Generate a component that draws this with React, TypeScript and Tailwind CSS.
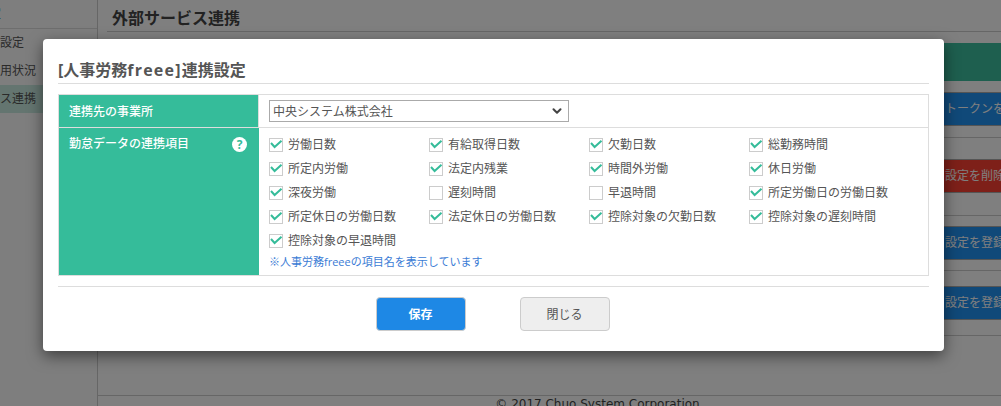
import React from "react";
import { ChevronDown } from "lucide-react";

const rows: { label: string; on: boolean }[] = [
  { label: "労働日数", on: true },
  { label: "有給取得日数", on: true },
  { label: "欠勤日数", on: true },
  { label: "総勤務時間", on: true },
  { label: "所定内労働", on: true },
  { label: "法定内残業", on: true },
  { label: "時間外労働", on: true },
  { label: "休日労働", on: true },
  { label: "深夜労働", on: true },
  { label: "遅刻時間", on: false },
  { label: "早退時間", on: false },
  { label: "所定労働日の労働日数", on: true },
  { label: "所定休日の労働日数", on: true },
  { label: "法定休日の労働日数", on: true },
  { label: "控除対象の欠勤日数", on: true },
  { label: "控除対象の遅刻時間", on: true },
  { label: "控除対象の早退時間", on: true },
];

function Check({ label, on }: { label: string; on: boolean }) {
  return (
    <div className="flex h-[24px] items-center gap-[5px]">
      <span className="flex h-[14px] w-[14px] shrink-0 items-center justify-center border border-[#cccccc] bg-white">
        {on && (
          <svg width="12" height="12" viewBox="0 0 12 12" fill="none" className="overflow-visible">
            <path d="M1 4 L4.6 8 L11.5 1.8" stroke="#35bc9a" strokeWidth="2" />
          </svg>
        )}
      </span>
      <span className="whitespace-nowrap">{label}</span>
    </div>
  );
}

export default function App() {
  return (
    <div className="relative h-[406px] w-[1001px] overflow-hidden bg-white text-[12px] text-[#555555] [font-family:'Open_Sans','Noto_Sans_CJK_JP',sans-serif]">
      {/* page behind the dialog */}
      <div className="flex h-full">
        <aside className="w-[98px] shrink-0 overflow-hidden border-r border-[#cccccc] bg-[#fdfdfd]">
          <div className="h-[29px] border-b border-[#dddddd] pt-[6px] text-[#2a8fb0]">
            <span className="-ml-[11px] block leading-[16px]">定</span>
          </div>
          <div className="flex h-[28px] items-center whitespace-nowrap">
            <span className="-ml-[24px]">基本設定</span>
          </div>
          <div className="flex h-[28px] items-center whitespace-nowrap">
            <span className="-ml-[24px]">ご利用状況</span>
          </div>
          <div className="flex h-[28px] items-center whitespace-nowrap bg-[#c8ebe0]">
            <span className="-ml-[36px]">サービス連携</span>
          </div>
        </aside>
        <main className="flex min-w-0 flex-1 flex-col">
          <div className="ml-[9px] h-[32px] border-b border-[#cccccc] pl-[5px] text-[16px] leading-[36px] font-bold text-[#444444]">
            外部サービス連携
          </div>
          <div className="ml-[9px] flex flex-col items-end border-b border-[#cccccc] pt-[11px] pb-[11px]">
            <div className="h-[38px] w-[100px] bg-[#3cbe9e]" />
            <div className="mt-[11px] flex h-[34px] w-[100px] items-center overflow-hidden border-y border-[#aaaaaa] bg-[#2092f2] pl-[44px] text-[12px] whitespace-nowrap text-white">
              トークンを取得
            </div>
          </div>
          <div className="ml-[9px] flex flex-col items-end border-b border-[#cccccc] pt-[21px] pb-[22px]">
            <div className="flex h-[34px] w-[100px] items-center overflow-hidden border-y border-[#aaaaaa] bg-[#fd4033] pl-[44px] text-[12px] whitespace-nowrap text-white">
              設定を削除
            </div>
          </div>
          <div className="ml-[9px] flex flex-col items-end border-b border-[#cccccc] pt-[10px] pb-[10px]">
            <div className="flex h-[34px] w-[100px] items-center overflow-hidden border-y border-[#aaaaaa] bg-[#2092f2] pl-[44px] text-[12px] whitespace-nowrap text-white">
              設定を登録
            </div>
          </div>
          <div className="ml-[9px] flex flex-col items-end border-b border-[#cccccc] pt-[15px] pb-[15px]">
            <div className="flex h-[34px] w-[100px] items-center overflow-hidden border-y border-[#aaaaaa] bg-[#2092f2] pl-[44px] text-[12px] whitespace-nowrap text-white">
              設定を登録
            </div>
          </div>
          <div className="mt-auto h-[11px] overflow-visible border-t border-[#cccccc] pl-[96px] text-center text-[12px] leading-[16px] text-[#444444] [font-family:'DejaVu_Sans',sans-serif]">
            © 2017 Chuo System Corporation
          </div>
        </main>
      </div>

      {/* overlay */}
      <div className="absolute inset-0 bg-black/50" />

      {/* dialog */}
      <div className="absolute top-[39px] left-[43px] w-[901px] rounded-[4px] bg-white px-[15px] pt-[20px] pb-[20px] shadow-[0_5px_15px_rgba(0,0,0,0.5)]">
        <h2 className="h-[25px] border-b border-[#dddddd] text-[16px] leading-[22px] font-bold text-[#555555]">
          [人事労務<span className="tracking-[1.2px]">freee]</span>連携設定
        </h2>
        <div className="mt-[10px] border border-[#dddddd]">
          <div className="flex h-[33px] border-b border-[#dddddd]">
            <div className="flex w-[200px] shrink-0 items-center border-r border-[#dddddd] bg-[#35bc9a] pt-[1px] pl-[10px] font-medium text-white">
              連携先の事業所
            </div>
            <div className="flex items-center pl-[10px]">
              <div className="relative">
                <select className="block h-[22px] w-[300px] appearance-none border border-[#aaaaaa] bg-white pt-[1px] pl-[3px] text-[12px] text-[#555555]">
                  <option>中央システム株式会社</option>
                </select>
                <ChevronDown
                  className="pointer-events-none absolute top-[4px] right-[5px] h-[14px] w-[14px] text-[#444444]"
                  strokeWidth={3.5}
                />
              </div>
            </div>
          </div>
          <div className="flex h-[147px]">
            <div className="flex w-[200px] shrink-0 items-start justify-between bg-[#35bc9a] pt-[7px] pr-[12px] pl-[10px] font-medium text-white">
              <span>勤怠データの連携項目</span>
              <span className="mt-[2px] flex h-[15px] w-[15px] items-center justify-center rounded-full bg-white text-[12px] leading-none font-bold text-[#35bc9a]">
                ?
              </span>
            </div>
            <div className="flex-1 pt-[5px] pl-[10px]">
              <div className="grid grid-cols-[160px_160px_160px_160px]">
                {rows.map((r) => (
                  <Check key={r.label} label={r.label} on={r.on} />
                ))}
              </div>
              <p className="text-[11px] leading-[18px] text-[#3a7bd5]">※人事労務freeeの項目名を表示しています</p>
            </div>
          </div>
        </div>
        <div className="mt-[10px] flex justify-center gap-[54px] border-t border-[#dddddd] pt-[10px] pr-[2px]">
          <button className="h-[34px] w-[90px] rounded-[4px] border border-[#cccccc] bg-[#1e88e5] pt-[1px] font-bold text-white">
            保存
          </button>
          <button className="h-[34px] w-[90px] rounded-[4px] border border-[#cccccc] bg-[#eeeeee] pt-[1px] text-[#555555]">
            閉じる
          </button>
        </div>
      </div>
    </div>
  );
}
